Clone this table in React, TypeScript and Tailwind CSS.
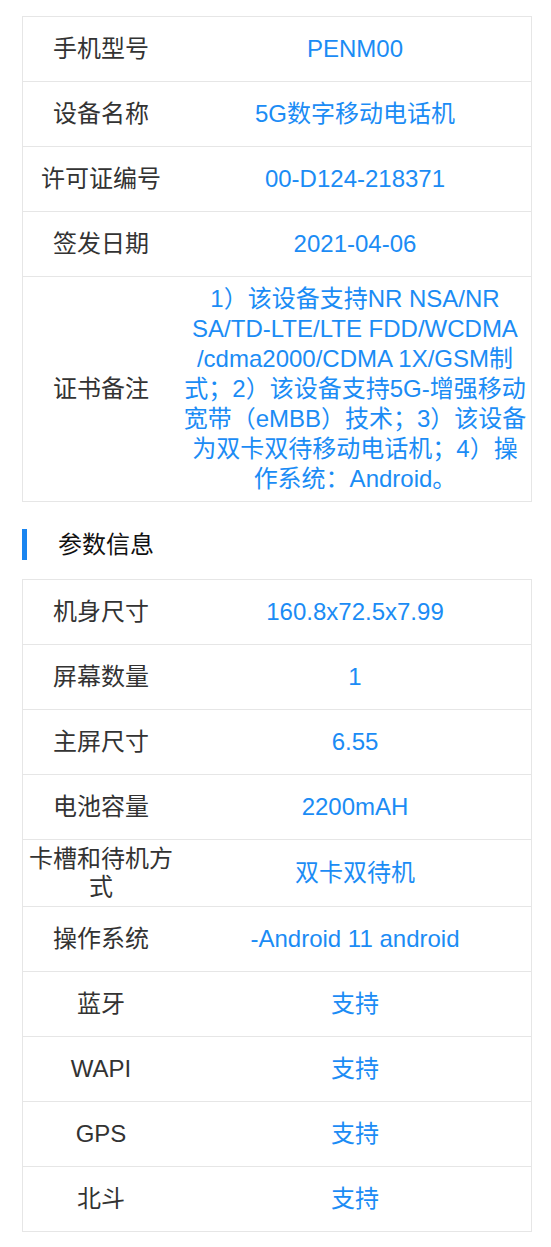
import React from "react";

type Row = {
  label: string;
  value: React.ReactNode;
};

const certRows: Row[] = [
  { label: "手机型号", value: "PENM00" },
  { label: "设备名称", value: "5G数字移动电话机" },
  { label: "许可证编号", value: "00-D124-218371" },
  { label: "签发日期", value: "2021-04-06" },
  {
    label: "证书备注",
    value: (
      <>
        1）该设备支持NR NSA/NR
        <br />
        SA/TD-LTE/LTE FDD/WCDMA
        <br />
        /cdma2000/CDMA 1X/GSM制
        <br />
        式；2）该设备支持5G-增强移动
        <br />
        宽带（eMBB）技术；3）该设备
        <br />
        为双卡双待移动电话机；4）操
        <br />
        作系统：Android。
      </>
    ),
  },
];

const paramRows: Row[] = [
  { label: "机身尺寸", value: "160.8x72.5x7.99" },
  { label: "屏幕数量", value: "1" },
  { label: "主屏尺寸", value: "6.55" },
  { label: "电池容量", value: "2200mAH" },
  { label: "卡槽和待机方式", value: "双卡双待机" },
  { label: "操作系统", value: "-Android 11 android" },
  { label: "蓝牙", value: "支持" },
  { label: "WAPI", value: "支持" },
  { label: "GPS", value: "支持" },
  { label: "北斗", value: "支持" },
];

const InfoTable = ({ rows }: { rows: Row[] }) => {
  return (
    <div className="w-[510px] border border-[#e6e6e6] divide-y divide-[#e6e6e6] bg-white">
      {rows.map((row) => (
        <div key={row.label} className="flex">
          <div className="w-[156px] min-h-[64px] shrink-0 flex items-center justify-center px-[5px] py-[5px] text-center text-[24px] leading-[28px] text-[#333333]">
            {row.label}
          </div>
          <div className="flex-1 min-h-[64px] flex items-center justify-center px-[3px] py-[7px] text-center text-[24px] leading-[30px] text-[#1b8cf5]">
            <span>{row.value}</span>
          </div>
        </div>
      ))}
    </div>
  );
};

const App = () => {
  return (
    <div
      className="min-h-screen bg-white pl-[22px] pt-[16px] pb-[14px]"
      style={{ fontFamily: '"Liberation Sans", "Noto Sans CJK SC", sans-serif' }}
    >
      <InfoTable rows={certRows} />

      <div className="flex items-center mt-[27px] mb-[19px]">
        <div className="w-[5px] h-[31px] bg-[#1a85f0]" />
        <h2 className="ml-[31px] text-[24px] leading-[31px] text-[#111111]">
          参数信息
        </h2>
      </div>

      <InfoTable rows={paramRows} />
    </div>
  );
};

export default App;
